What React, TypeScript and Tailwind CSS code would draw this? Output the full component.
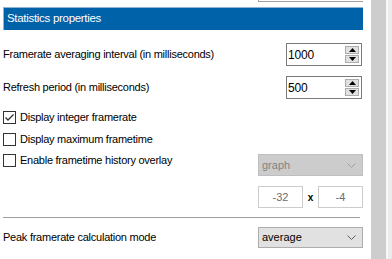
const font = { fontFamily: '"Liberation Sans", Arial, sans-serif' };

function SpinBox({ value }: { value: string }) {
  return (
    <div className="flex h-[23px] w-[76px] items-stretch border border-[#7a7a7a] bg-white">
      <div className="flex flex-1 items-center pl-[1px] text-[12px] tracking-[-0.2px] text-black">{value}</div>
      <div className="flex w-[16px] flex-col justify-center gap-[1px] py-[2px] pr-[2px]">
        <div className="flex flex-1 items-center justify-center border border-[#adadad] bg-[#e1e1e1]">
          <svg width="7" height="4" viewBox="0 0 7 4">
            <path d="M0 4 L3.5 0 L7 4 Z" fill="#000" />
          </svg>
        </div>
        <div className="flex flex-1 items-center justify-center border border-[#adadad] bg-[#e1e1e1]">
          <svg width="7" height="4" viewBox="0 0 7 4">
            <path d="M0 0 L3.5 4 L7 0 Z" fill="#000" />
          </svg>
        </div>
      </div>
    </div>
  );
}

function CheckRow({ label, checked }: { label: string; checked?: boolean }) {
  return (
    <div className="flex h-[13px] items-center gap-[4px]">
      <div className="flex h-[13px] w-[13px] items-center justify-center border border-[#333] bg-white">
        {checked && (
          <svg width="11" height="11" viewBox="0 0 11 11">
            <path d="M1.5 5.5 L4 8 L9.5 2.5" fill="none" stroke="#333" strokeWidth="1.3" />
          </svg>
        )}
      </div>
      <span className="text-[11px] leading-[13px] tracking-[-0.25px] text-black">{label}</span>
    </div>
  );
}

function Chevron({ color }: { color: string }) {
  return (
    <svg width="9" height="5" viewBox="0 0 9 5">
      <path d="M0.5 0.5 L4.5 4.5 L8.5 0.5" fill="none" stroke={color} strokeWidth="1" />
    </svg>
  );
}

export default function App() {
  return (
    <div className="flex h-[259px] w-[392px] overflow-hidden bg-white" style={font}>
      <div className="flex w-[363px] flex-col pl-[3px]">
        <div className="ml-[255px] h-[2px] w-[105px] border-b border-l border-[#a0a0a0]" />
        <div className="mt-[5px] flex h-[23px] items-center border-l border-t border-[#8fb5d6] bg-[#0062a8] pl-[3px] text-[11.5px] tracking-[-0.3px] text-white">
          Statistics properties
        </div>

        <div className="mt-[13px] flex items-center justify-between pr-[1px]">
          <span className="text-[11px] tracking-[-0.25px] text-black">Framerate averaging interval (in milliseconds)</span>
          <SpinBox value="1000" />
        </div>
        <div className="mt-[10px] flex items-center justify-between pr-[1px]">
          <span className="text-[11px] tracking-[-0.25px] text-black">Refresh period (in milliseconds)</span>
          <SpinBox value="500" />
        </div>

        <div className="mt-[12px] flex flex-col gap-[9px]">
          <CheckRow label="Display integer framerate" checked />
          <CheckRow label="Display maximum frametime" />
        </div>

        <div className="mt-[8px] flex items-start justify-between">
          <CheckRow label="Enable frametime history overlay" />
          <div className="flex flex-col items-end gap-[10px]">
            <div className="flex h-[22px] w-[105px] items-center justify-between border border-[#bfbfbf] bg-[#cccccc] pl-[3px] pr-[6px] text-[11px] text-[#838383]">
              <span>graph</span>
              <Chevron color="#a0a0a0" />
            </div>
            <div className="flex w-[105px] items-center justify-between">
              <div className="flex h-[22px] w-[45px] items-center justify-center border border-[#cccccc] bg-white text-[11px] text-[#6d6d6d]">
                -32
              </div>
              <span className="text-[10px] font-bold text-black">x</span>
              <div className="flex h-[22px] w-[45px] items-center justify-center border border-[#cccccc] bg-white text-[11px] text-[#6d6d6d]">
                -4
              </div>
            </div>
          </div>
        </div>

        <div className="mt-[9px] mr-[3px] h-[1px] bg-[#a0a0a0]" />

        <div className="mt-[9px] flex items-center justify-between">
          <span className="text-[11px] tracking-[-0.25px] text-black">Peak framerate calculation mode</span>
          <div className="flex h-[21px] w-[105px] items-center justify-between border border-[#adadad] bg-[#e1e1e1] pl-[3px] pr-[6px] text-[11px] text-black">
            <span>average</span>
            <Chevron color="#606060" />
          </div>
        </div>
      </div>

      <div className="ml-[8px] flex h-full">
        <div className="h-full w-[15px] bg-[#cdcdcd]" />
        <div className="h-full w-[2px] bg-[#f7f7f7]" />
        <div className="h-full w-[4px] bg-[#ebebeb]" />
      </div>
    </div>
  );
}
